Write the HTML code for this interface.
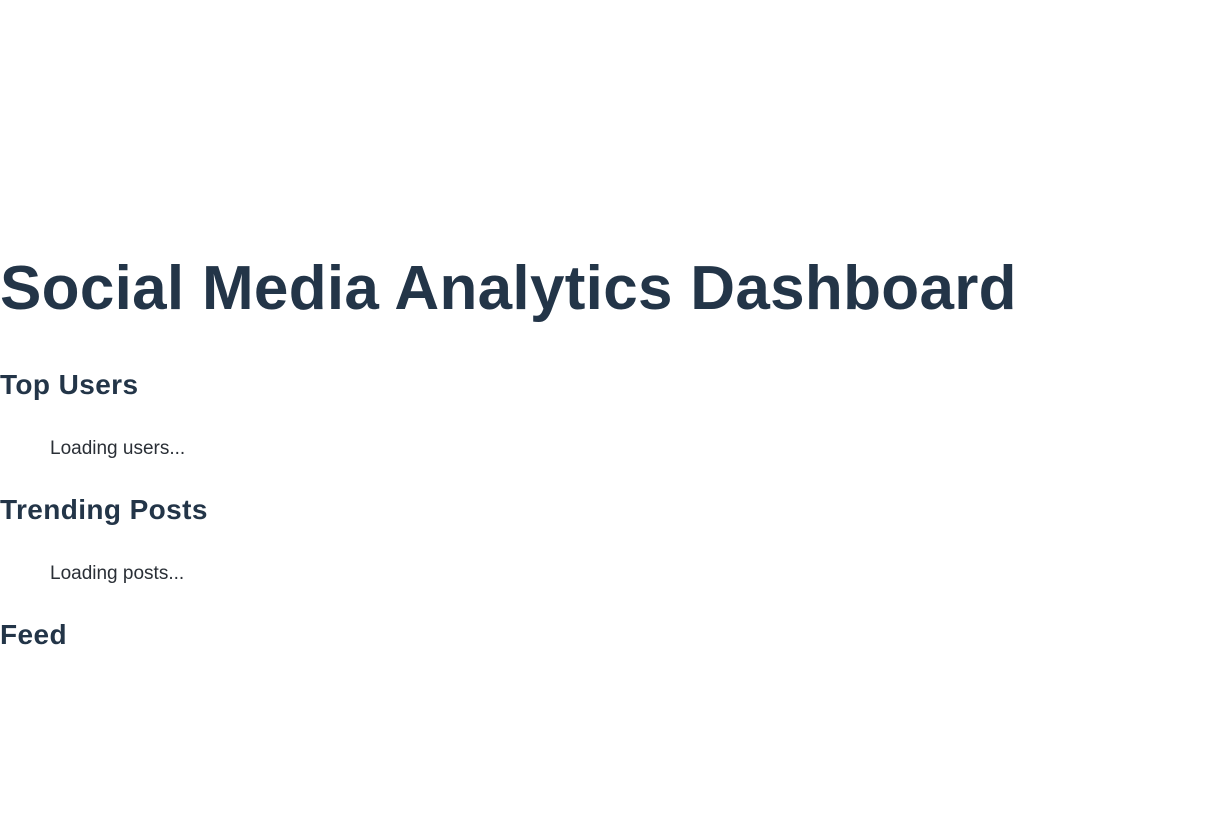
<!DOCTYPE html>
<html><head><style>
body{margin:0;background:#fff;font-family:"Liberation Sans",sans-serif;color:#233548;}
.wrap{position:relative;width:1230px;height:833px;}
h1{position:absolute;left:0;top:249px;margin:0;font-size:62px;font-weight:bold;letter-spacing:0.3px;white-space:nowrap;line-height:80px;}
h2{position:absolute;left:0;margin:0;font-size:28px;font-weight:bold;line-height:36px;letter-spacing:0.4px;}
p{position:absolute;left:50px;margin:0;font-size:19px;line-height:24px;color:#2a2f36;}
</style></head><body><div class="wrap">
<h1>Social Media Analytics Dashboard</h1>
<h2 style="top:367px">Top Users</h2>
<p style="top:437px">Loading users...</p>
<h2 style="top:492px">Trending Posts</h2>
<p style="top:562px">Loading posts...</p>
<h2 style="top:617px">Feed</h2>
</div></body></html>
